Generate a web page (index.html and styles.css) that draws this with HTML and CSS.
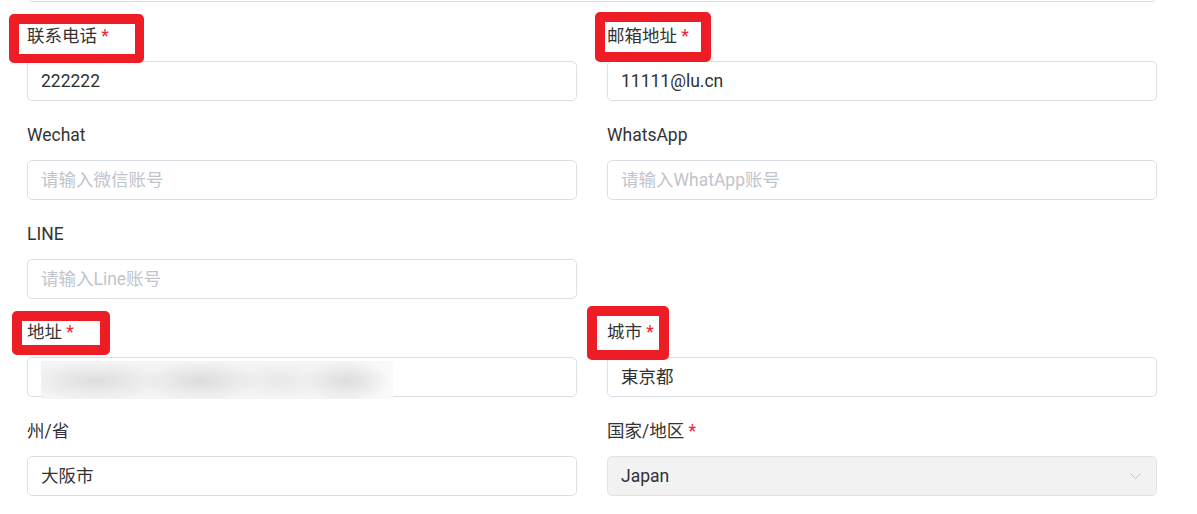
FILE: index.html
```html
<!DOCTYPE html>
<html lang="zh">
<head>
<meta charset="utf-8">
<title>联系信息</title>
<link rel="stylesheet" href="styles.css">
</head>
<body>
<form class="form">
  <div class="prev-field"><div class="input"></div></div>

  <div class="field">
    <label class="label">联系电话 <span class="req">*</span></label>
    <div class="input">222222</div>
    <span class="mark mark-phone"></span>
  </div>
  <div class="field">
    <label class="label">邮箱地址 <span class="req">*</span></label>
    <div class="input">11111@lu.cn</div>
    <span class="mark mark-email"></span>
  </div>

  <div class="field">
    <label class="label">Wechat</label>
    <div class="input placeholder">请输入微信账号</div>
  </div>
  <div class="field">
    <label class="label">WhatsApp</label>
    <div class="input placeholder">请输入WhatApp账号</div>
  </div>

  <div class="field">
    <label class="label">LINE</label>
    <div class="input placeholder">请输入Line账号</div>
  </div>
  <div class="field empty"></div>

  <div class="field">
    <label class="label">地址 <span class="req">*</span></label>
    <div class="input address">
      <div class="blur" aria-label="已遮盖的地址"></div>
    </div>
    <span class="mark mark-addr"></span>
  </div>
  <div class="field">
    <label class="label">城市 <span class="req">*</span></label>
    <div class="input">東京都</div>
    <span class="mark mark-city"></span>
  </div>

  <div class="field">
    <label class="label">州/省</label>
    <div class="input">大阪市</div>
  </div>
  <div class="field">
    <label class="label">国家/地区 <span class="req">*</span></label>
    <div class="input select">
      <span>Japan</span>
      <svg class="chevron" width="11" height="6" viewBox="0 0 11 6"><polyline points="0.5,0.5 5.5,5.5 10.5,0.5" fill="none" stroke="#c6c8cc" stroke-width="1"/></svg>
    </div>
  </div>
</form>
</body>
</html>
```
FILE: styles.css
```css
* { box-sizing: border-box; }
html, body { margin: 0; padding: 0; background: #fff; overflow: hidden; }
body {
  font-family: Roboto, "Noto Sans CJK SC", "Noto Sans CJK JP", sans-serif;
  font-size: 17.5px;
  color: #303133;
}
.form {
  display: grid;
  grid-template-columns: 550px 550px;
  column-gap: 30px;
  padding-left: 27px;
  width: 1157px;
}
.prev-field {
  grid-column: 1 / span 2;
  margin-top: -38px;
  margin-bottom: 22px;
}
.field {
  position: relative;
  margin-bottom: 21.75px;
}
.label {
  display: block;
  line-height: 24px;
  height: 24px;
  margin-bottom: 13px;
  color: #333;
  white-space: nowrap;
}
.req { color: #f5222d; }
.input {
  position: relative;
  height: 40px;
  border: 1px solid #dcdfe6;
  border-radius: 5px;
  padding: 0 13px;
  line-height: 38px;
  color: #303133;
  background: #fff;
  white-space: nowrap;
}
.placeholder { color: #c0c4cc; }
.select {
  background: #f2f2f2;
  border-color: #e2e2e2;
  display: flex;
  align-items: center;
  justify-content: space-between;
  padding-right: 15px;
}
.chevron { display: block; }
.blur {
  position: absolute;
  left: 13px;
  top: 3px;
  width: 352px;
  height: 38px;
  background:
    radial-gradient(ellipse 70px 20px at 55px 20px, #dedede 0%, rgba(222,222,222,0) 100%),
    radial-gradient(ellipse 60px 20px at 160px 20px, #dcdcdc 0%, rgba(220,220,220,0) 100%),
    radial-gradient(ellipse 45px 18px at 238px 20px, #e8e8e8 0%, rgba(232,232,232,0) 100%),
    radial-gradient(ellipse 45px 20px at 305px 20px, #dddddd 0%, rgba(221,221,221,0) 100%),
    linear-gradient(to right, #f4f4f4 0%, #f4f4f4 88%, #fafafa 100%);
}
.mark {
  position: absolute;
  border: 10px solid #ee1c25;
  border-radius: 5px;
  pointer-events: none;
}
.mark-phone { left: -18px; top: -10px; width: 135px; height: 49px; border-width: 10px 9px 9px 10px; }
.mark-email { left: -12px; top: -12px; width: 116px; height: 50px; }
.mark-addr { left: -15px; top: -9px; width: 98px; height: 44px; }
.mark-city { left: -20px; top: -14px; width: 82px; height: 54px; }
```
